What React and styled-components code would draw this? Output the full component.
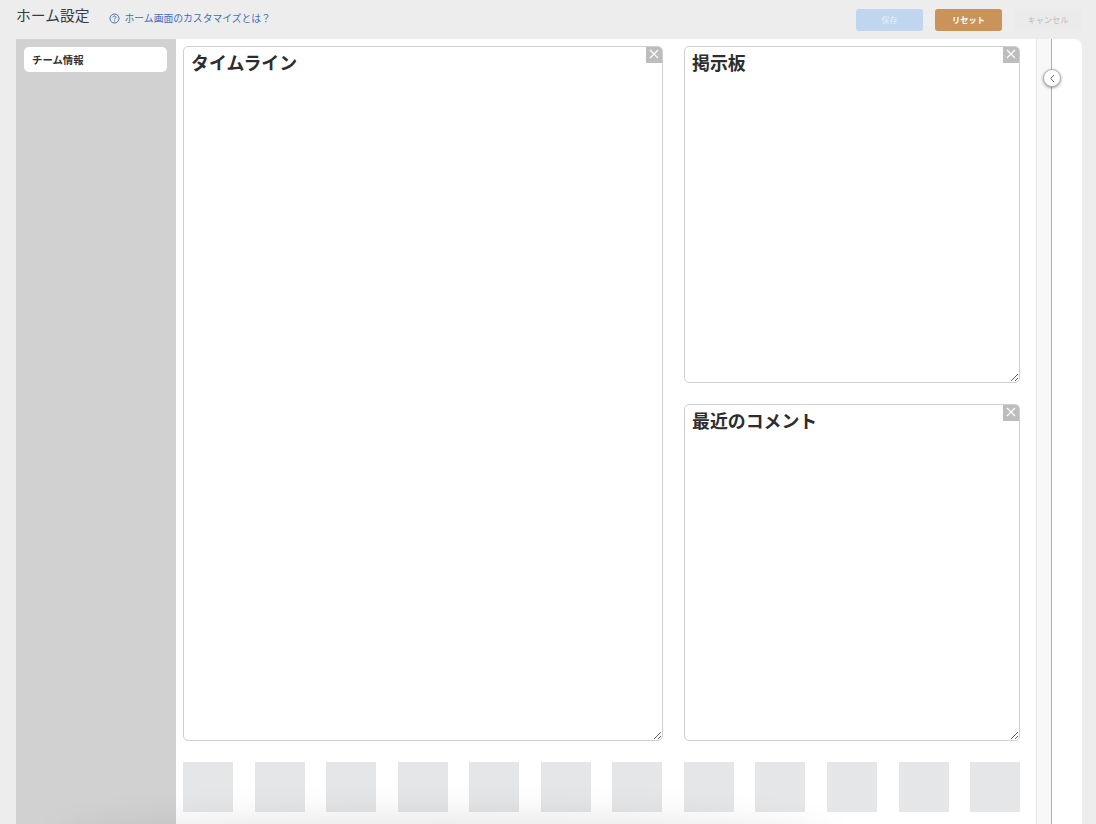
import React from "react";
import styled, { createGlobalStyle } from "styled-components";

const Global = createGlobalStyle`
  html, body { margin: 0; height: 824px; overflow: hidden; background: #ededed; }
  body { font-family: "Liberation Sans", "Noto Sans CJK JP", sans-serif; color: #333; }
  * { box-sizing: border-box; }
`;

const Page = styled.div`
  position: relative;
  height: 824px;
  overflow: hidden;
  display: flex;
  flex-direction: column;
  padding: 0 14px 0 16px;
`;

const Header = styled.header`
  height: 39px;
  flex: none;
  display: flex;
  align-items: flex-start;
`;

const Title = styled.h1`
  margin: 6px 0 0;
  font-size: 14.8px;
  line-height: 20px;
  font-weight: 400;
  color: #3a3a3a;
`;

const HelpLink = styled.a`
  display: flex;
  align-items: center;
  gap: 5px;
  margin: 9px 0 0 19px;
  height: 18px;
  font-size: 9.8px;
  color: #3f6fb5;
`;

const Actions = styled.div`
  margin-left: auto;
  display: flex;
  gap: 12px;
  padding-top: 9px;
`;

const ActionButton = styled.button`
  width: ${(p) => p.$w || 67}px;
  height: 22px;
  padding: 0 0 3px;
  border: 0;
  border-radius: 3px;
  font: inherit;
  font-size: 8.2px;
  font-weight: ${(p) => p.$weight || 400};
  background: ${(p) => p.$bg};
  color: ${(p) => p.$fg};
`;

const Main = styled.main`
  flex: 1;
  min-height: 0;
  display: flex;
  background: #fff;
  border-top-right-radius: 8px;
  overflow: hidden;
`;

const Sidebar = styled.aside`
  width: 160px;
  flex: none;
  background: #d1d1d1;
  padding: 8px 9px 0 8px;
`;

const SideItem = styled.div`
  height: 25px;
  padding-left: 8px;
  display: flex;
  align-items: center;
  background: #fff;
  border-radius: 5px;
  font-size: 10.4px;
  font-weight: 700;
  color: #333;
`;

const Content = styled.section`
  width: 860px;
  flex: none;
  padding: 7px 16px 0 7px;
`;

const Columns = styled.div`
  display: flex;
  justify-content: space-between;
`;

const RightColumn = styled.div`
  display: flex;
  flex-direction: column;
  gap: 21px;
`;

const Panel = styled.div`
  position: relative;
  width: ${(p) => p.$w}px;
  height: ${(p) => p.$h}px;
  background: #fff;
  border: 1px solid #cfcfcf;
  border-radius: 5px;
  padding: 4px 7px;
  overflow: hidden;
  resize: both;
`;

const PanelTitle = styled.h2`
  margin: 0;
  font-size: 17.9px;
  line-height: 26px;
  font-weight: 700;
  color: #2d2d2d;
`;

const CloseButton = styled.button`
  position: absolute;
  top: 0;
  right: 0;
  width: 16px;
  height: 16px;
  padding: 0 0 3px;
  border: 0;
  background: #bdbdbd;
  display: flex;
  align-items: center;
  justify-content: center;
`;

const Tray = styled.div`
  display: flex;
  justify-content: space-between;
  width: 837px;
  margin: 21px 0 0 0.2px;
`;

const TrayItem = styled.div`
  width: 50px;
  height: 50px;
  background: #e5e6e8;
`;

const Rail = styled.div`
  width: 15px;
  flex: none;
  background: #f8f8f8;
  border-left: 1px solid #e2e2e2;
`;

const Preview = styled.div`
  flex: 1;
  position: relative;
  border-left: 1px solid #b0b0b0;
`;

const Toggle = styled.button`
  position: absolute;
  top: 30px;
  left: -9px;
  width: 18px;
  height: 18px;
  padding: 0;
  border: 1px solid #b0b0b0;
  border-radius: 50%;
  background: #fff;
  box-shadow: 0 1px 3px rgba(0, 0, 0, 0.4);
  display: flex;
  align-items: center;
  justify-content: center;
`;

const BottomShadow = styled.div`
  position: absolute;
  left: 70px;
  top: 838px;
  width: 750px;
  height: 30px;
  border-radius: 50%;
  box-shadow: 0 -4px 40px 14px rgba(0, 0, 0, 0.12);
  pointer-events: none;
`;

const Close = () => (
  <svg width="10" height="10" viewBox="0 0 10 10" fill="none" stroke="#fff" strokeWidth="1.2">
    <path d="M1 1l8 8M9 1l-8 8" />
  </svg>
);

export default function App() {
  return (
    <>
      <Global />
      <Page>
        <Header>
          <Title>ホーム設定</Title>
          <HelpLink>
            <svg width="11" height="11" viewBox="0 0 11 11" fill="none" stroke="#3f6fb5" strokeWidth="1">
              <circle cx="5.5" cy="5.5" r="4.5" />
              <path d="M4 4.4c0-.9.7-1.4 1.5-1.4S7 3.5 7 4.3c0 1-1.5 1-1.5 2.1" />
              <path d="M5.5 7.4v1" />
            </svg>
            ホーム画面のカスタマイズとは？
          </HelpLink>
          <Actions>
            <ActionButton $bg="#c0d6ee" $fg="#e6eff9">保存</ActionButton>
            <ActionButton $bg="#c99359" $fg="#fff" $weight={700}>リセット</ActionButton>
            <ActionButton $bg="#ebebeb" $fg="#bdbdbd" $w={68}>キャンセル</ActionButton>
          </Actions>
        </Header>
        <Main>
          <Sidebar>
            <SideItem>チーム情報</SideItem>
          </Sidebar>
          <Content>
            <Columns>
              <Panel $w={480} $h={695}>
                <PanelTitle>タイムライン</PanelTitle>
                <CloseButton><Close /></CloseButton>
              </Panel>
              <RightColumn>
                <Panel $w={336} $h={337}>
                  <PanelTitle>掲示板</PanelTitle>
                  <CloseButton><Close /></CloseButton>
                </Panel>
                <Panel $w={336} $h={337}>
                  <PanelTitle>最近のコメント</PanelTitle>
                  <CloseButton><Close /></CloseButton>
                </Panel>
              </RightColumn>
            </Columns>
            <Tray>
              {Array.from({ length: 12 }, (_, i) => <TrayItem key={i} />)}
            </Tray>
          </Content>
          <Rail />
          <Preview>
            <Toggle>
              <svg width="9" height="9" viewBox="0 0 9 9" fill="none" stroke="#555" strokeWidth="0.9">
                <path d="M6 1L2.8 4.5 6 8" />
              </svg>
            </Toggle>
          </Preview>
        </Main>
        <BottomShadow />
      </Page>
    </>
  );
}
